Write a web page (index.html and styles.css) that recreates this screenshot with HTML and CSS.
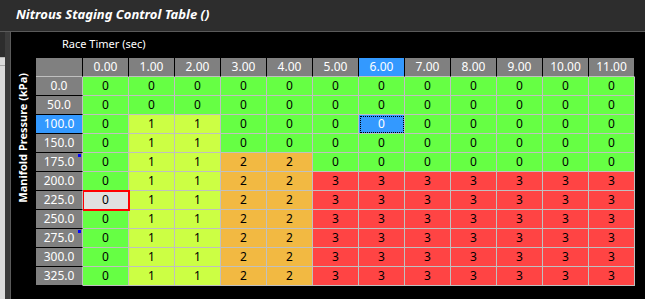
FILE: index.html
```html
<!DOCTYPE HTML>
<html>
	<head>
		<title>Nitrous Staging Control Table</title>
		<meta name="viewport" content="width=device-width, initial-scale=1.0">
		<link rel="stylesheet" href="styles.css">
	</head>
	<body>
	<div class="titlebar">
		<span class="title">Nitrous Staging Control Table ()</span>
	</div>
	<div class="main">
		<div class="side">
			<div class="side-light"></div>
			<div class="side-dark"></div>
		</div>
		<div class="panel">
			<div class="caption">Race Timer (sec)</div>
			<div class="table-row">
				<div class="axis">Manifold Pressure (kPa)</div>
				<table class="grid">
					<tr class="head">
						<th class="corner"></th>
						<th>0.00</th><th>1.00</th><th>2.00</th><th>3.00</th><th>4.00</th><th>5.00</th>
						<th class="active">6.00</th><th>7.00</th><th>8.00</th><th>9.00</th><th>10.00</th><th>11.00</th>
					</tr>
					<tr>
						<th>0.0</th>
						<td class="v0">0</td><td class="v0">0</td><td class="v0">0</td><td class="v0">0</td><td class="v0">0</td><td class="v0">0</td>
						<td class="v0">0</td><td class="v0">0</td><td class="v0">0</td><td class="v0">0</td><td class="v0">0</td><td class="v0">0</td>
					</tr>
					<tr>
						<th>50.0</th>
						<td class="v0">0</td><td class="v0">0</td><td class="v0">0</td><td class="v0">0</td><td class="v0">0</td><td class="v0">0</td>
						<td class="v0">0</td><td class="v0">0</td><td class="v0">0</td><td class="v0">0</td><td class="v0">0</td><td class="v0">0</td>
					</tr>
					<tr>
						<th class="active">100.0</th>
						<td class="v0">0</td><td class="v1">1</td><td class="v1">1</td><td class="v0">0</td><td class="v0">0</td><td class="v0">0</td>
						<td class="sel">0</td><td class="v0">0</td><td class="v0">0</td><td class="v0">0</td><td class="v0">0</td><td class="v0">0</td>
					</tr>
					<tr>
						<th>150.0</th>
						<td class="v0">0</td><td class="v1">1</td><td class="v1">1</td><td class="v0">0</td><td class="v0">0</td><td class="v0">0</td>
						<td class="v0">0</td><td class="v0">0</td><td class="v0">0</td><td class="v0">0</td><td class="v0">0</td><td class="v0">0</td>
					</tr>
					<tr>
						<th class="mark">175.0</th>
						<td class="v0">0</td><td class="v1">1</td><td class="v1">1</td><td class="v2">2</td><td class="v2">2</td><td class="v0">0</td>
						<td class="v0">0</td><td class="v0">0</td><td class="v0">0</td><td class="v0">0</td><td class="v0">0</td><td class="v0">0</td>
					</tr>
					<tr>
						<th>200.0</th>
						<td class="v0">0</td><td class="v1">1</td><td class="v1">1</td><td class="v2">2</td><td class="v2">2</td><td class="v3">3</td>
						<td class="v3">3</td><td class="v3">3</td><td class="v3">3</td><td class="v3">3</td><td class="v3">3</td><td class="v3">3</td>
					</tr>
					<tr>
						<th>225.0</th>
						<td class="cur">0</td><td class="v1">1</td><td class="v1">1</td><td class="v2">2</td><td class="v2">2</td><td class="v3">3</td>
						<td class="v3">3</td><td class="v3">3</td><td class="v3">3</td><td class="v3">3</td><td class="v3">3</td><td class="v3">3</td>
					</tr>
					<tr>
						<th>250.0</th>
						<td class="v0">0</td><td class="v1">1</td><td class="v1">1</td><td class="v2">2</td><td class="v2">2</td><td class="v3">3</td>
						<td class="v3">3</td><td class="v3">3</td><td class="v3">3</td><td class="v3">3</td><td class="v3">3</td><td class="v3">3</td>
					</tr>
					<tr>
						<th class="mark">275.0</th>
						<td class="v0">0</td><td class="v1">1</td><td class="v1">1</td><td class="v2">2</td><td class="v2">2</td><td class="v3">3</td>
						<td class="v3">3</td><td class="v3">3</td><td class="v3">3</td><td class="v3">3</td><td class="v3">3</td><td class="v3">3</td>
					</tr>
					<tr>
						<th>300.0</th>
						<td class="v0">0</td><td class="v1">1</td><td class="v1">1</td><td class="v2">2</td><td class="v2">2</td><td class="v3">3</td>
						<td class="v3">3</td><td class="v3">3</td><td class="v3">3</td><td class="v3">3</td><td class="v3">3</td><td class="v3">3</td>
					</tr>
					<tr>
						<th>325.0</th>
						<td class="v0">0</td><td class="v1">1</td><td class="v1">1</td><td class="v2">2</td><td class="v2">2</td><td class="v3">3</td>
						<td class="v3">3</td><td class="v3">3</td><td class="v3">3</td><td class="v3">3</td><td class="v3">3</td><td class="v3">3</td>
					</tr>
				</table>
			</div>
		</div>
	</div>
	</body>
</html>
```

FILE: styles.css
```css
html{
	height: 100%;
}

body{
	margin: 0;
	width: 645px;
	height: 299px;
	overflow: hidden;
	display: flex;
	flex-direction: column;
	background: #2d2d2d;
	font-family: "Noto Sans", "Open Sans", sans-serif;
	color: #fff;
}

.titlebar{
	height: 31px;
	flex: none;
	border-bottom: 1px solid #5a5a5a;
	padding-left: 16px;
	box-sizing: content-box;
}

.title{
	font-weight: bold;
	font-style: italic;
	font-size: 13px;
	line-height: 28px;
}

.main{
	flex: 1;
	display: flex;
	min-height: 0;
}

.side{
	width: 10px;
	flex: none;
	display: flex;
}

.side-light{
	width: 5px;
	margin-top: 25px;
	background: #dcdcdc;
	border-top: 1px solid #b8b8b8;
	box-shadow: inset 0 7px 0 #dcdcdc, inset 0 8px 0 #a8a8a8;
}

.side-dark{
	width: 5px;
	background: #3c3c3c;
}

.panel{
	flex: 1;
	background: #000;
	border-left: 1px solid #5a5a5a;
}

.caption{
	height: 26px;
	line-height: 23px;
	padding-left: 51px;
	font-size: 11px;
}

.table-row{
	display: flex;
	align-items: flex-start;
}

.axis{
	width: 25px;
	flex: none;
	margin-top: 15px;
	writing-mode: vertical-rl;
	transform: rotate(180deg);
	line-height: 23px;
	font-size: 11px;
	font-weight: bold;
}

.grid{
	border-collapse: separate;
	border-spacing: 0;
	table-layout: fixed;
	width: 599px;
	font-size: 12px;
}

.grid th,
.grid td{
	padding: 0;
	height: 18px;
	line-height: 18px;
	text-align: center;
	font-weight: normal;
}

.grid th{
	width: 45px;
	background: #808080;
	color: #fff;
	border-right: 1px solid #000;
	border-bottom: 1px solid #000;
}

.grid tr > th:first-child{
	width: 46px;
	border-right-color: #c0c0c0;
	position: relative;
}

.grid .head th.corner{
	border-right-color: #000;
}

.grid .head th{
	border-bottom-color: #c0c0c0;
}

.grid td{
	width: 45px;
	color: #000;
	border-right: 1px solid #c0c0c0;
	border-bottom: 1px solid #c0c0c0;
}

.grid th.active{
	background: #3399ff;
}

.v0{
	background: #66ff44;
}

.v1{
	background: #ccff44;
}

.v2{
	background: #f2b942;
}

.v3{
	background: #ff4444;
}

.grid td.sel{
	background: #3399ff;
	color: #fff;
	outline: 1px dotted #000;
	outline-offset: -2px;
}

.grid td.cur{
	background: #e0e0e0;
	outline: 2px solid #ff0000;
	outline-offset: -1px;
}

.mark::after{
	content: "";
	position: absolute;
	top: 1px;
	right: 1px;
	width: 3px;
	height: 3px;
	background: #0000ff;
}
```
